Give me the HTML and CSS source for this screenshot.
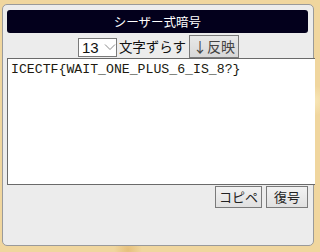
FILE: index.html
```html
<!DOCTYPE html>
<html>
<head>
<meta charset="utf-8">
<link rel="stylesheet" href="styles.css">
</head>
<body>
<div class="panel">
  <div class="title">シーザー式暗号</div>
  <div class="row">
    <div class="select"><span class="num">13</span><svg class="chev" width="12" height="8" viewBox="0 0 12 8"><path d="M1 1.5 L6 6.5 L11 1.5" fill="none" stroke="#8a8a8a" stroke-width="1"/></svg></div>
    <span class="label">文字ずらす</span>
    <button class="btn btn-apply">↓反映</button>
  </div>
  <textarea class="text" spellcheck="false">ICECTF{WAIT_ONE_PLUS_6_IS_8?}</textarea>
  <div class="actions">
    <button class="btn btn-copy">コピペ</button>
    <button class="btn btn-dec">復号</button>
  </div>
</div>
</body>
</html>
```
FILE: styles.css
```css
html, body {
  margin: 0;
  padding: 0;
  width: 320px;
  height: 252px;
  overflow: hidden;
}
body {
  background:
    radial-gradient(circle at 10% 20%, rgba(255,245,210,0.7) 0, rgba(255,245,210,0) 18px),
    radial-gradient(circle at 90% 90%, rgba(210,160,80,0.5) 0, rgba(210,160,80,0) 20px),
    radial-gradient(circle at 98% 40%, rgba(250,235,190,0.8) 0, rgba(250,235,190,0) 15px),
    radial-gradient(circle at 40% 99%, rgba(220,170,90,0.5) 0, rgba(220,170,90,0) 14px),
    #f0d69e;
  font-family: "Noto Sans CJK JP", "Noto Sans", sans-serif;
}
.panel {
  box-sizing: border-box;
  margin: 4px 0 0 2px;
  width: 312px;
  height: 242px;
  background: #ececec;
  border: 1px solid #9a9a9a;
  border-radius: 5px;
  padding: 5px 5px 0 4px;
  display: flex;
  flex-direction: column;
}
.title {
  height: 23px;
  background: #03001c;
  border-radius: 3px;
  color: #fff;
  font-size: 12.5px;
  line-height: 23px;
  text-align: center;
}
.row {
  display: flex;
  justify-content: center;
  align-items: center;
  gap: 2px;
  height: 24px;
  margin-top: 1px;
  padding-left: 2px;
}
.select {
  box-sizing: border-box;
  width: 39px;
  height: 19px;
  margin-top: 2px;
  border: 1px solid #7a7a7a;
  background: #fff;
  display: flex;
  align-items: center;
  padding-left: 3px;
  gap: 5px;
}
.num {
  font-family: "Liberation Sans", Arial, sans-serif;
  font-size: 15px;
  color: #111;
  line-height: 17px;
}
.chev { display: block; }
.label {
  font-size: 13.5px;
  color: #111;
  margin-right: 1px;
}
.btn {
  box-sizing: border-box;
  font-family: "Noto Sans CJK JP", "Noto Sans", sans-serif;
  font-size: 13px;
  color: #222;
  background: linear-gradient(#f2f2f2, #e0e0e0);
  border: 1px solid #7a7a7a;
  border-radius: 0;
  padding: 0;
  height: 22px;
  line-height: 18px;
  white-space: nowrap;
  text-align: center;
}
.btn-apply {
  width: 50px;
  height: 23px;
  font-size: 14px;
  background: linear-gradient(#e8e8e8, #d8d8d8);
  color: #444;
}
.text {
  box-sizing: border-box;
  display: block;
  flex: none;
  width: 308px;
  height: 127px;
  margin: 0;
  resize: none;
  border: 1px solid #6a6a6a;
  border-right: none;
  background: #fff;
  font-family: "Liberation Mono", "Courier New", monospace;
  font-size: 13.2px;
  line-height: 15px;
  color: #201a10;
  padding: 3px 3px;
  outline: none;
}
.actions {
  display: flex;
  justify-content: flex-end;
  gap: 4px;
  margin-top: 1px;
}
.btn-copy { width: 47px; }
.btn-dec { width: 42px; }
```
